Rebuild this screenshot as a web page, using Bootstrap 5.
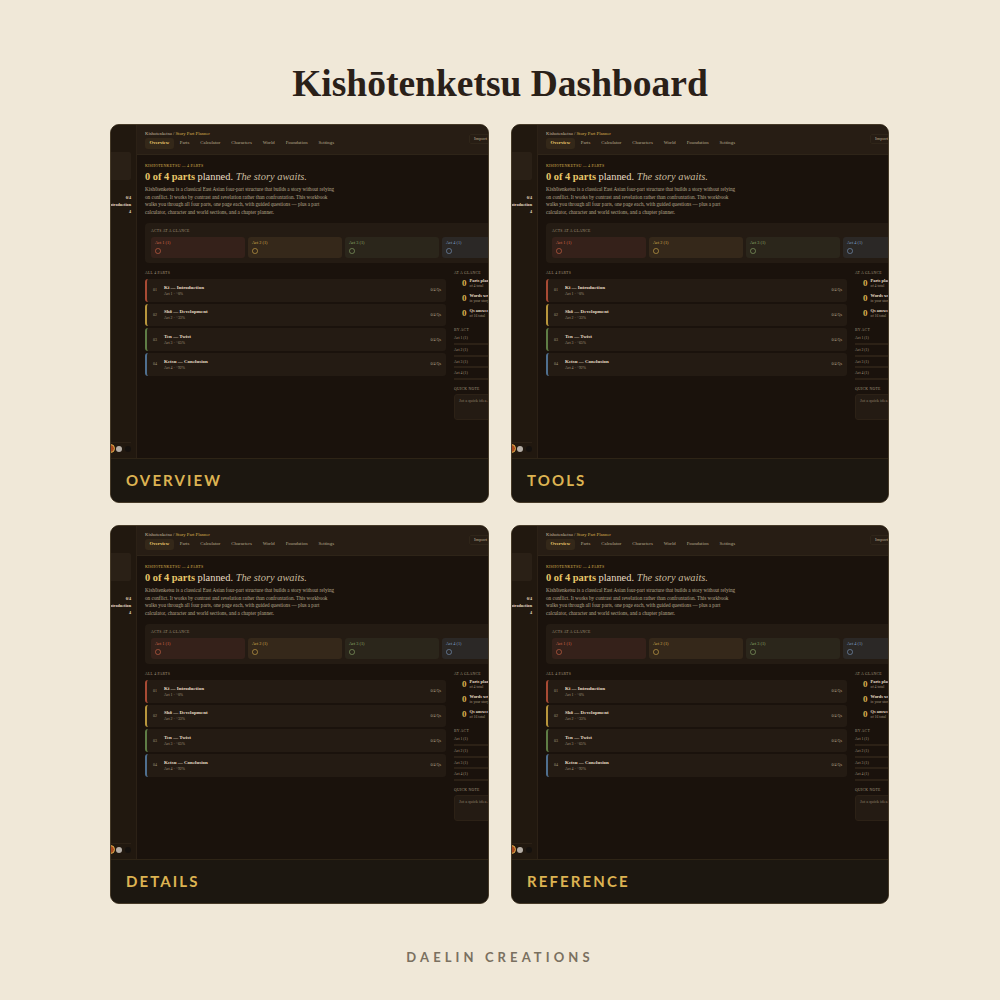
<!doctype html>
<html lang="en"><head><meta charset="utf-8"><title>Kishōtenketsu Dashboard</title>
<link href="https://cdn.jsdelivr.net/npm/bootstrap@5.3.0/dist/css/bootstrap.min.css" rel="stylesheet">
<style>
html,body{height:1000px;overflow:hidden}
body{background:#f0e8d8;font-family:"Liberation Serif",serif;color:#e8dcc4}
.sheet{height:1000px;width:1000px}
.bigtitle{font:700 37.5px/1 "Liberation Serif",serif;color:#2a2018;margin:0;padding-top:65px;height:124px;text-align:center}
.gridwrap{display:grid;grid-template-columns:379px 378px;grid-template-rows:379px 379px;gap:22px;margin-left:110px}
.pane{background:#1a120c;border:1px solid #463a28;border-radius:9px;overflow:hidden;display:flex;flex-direction:column}
.screen{height:334px;flex:none;display:flex;overflow:hidden;border-bottom:1px solid #2e2416}
.side{width:26px;flex:none;background:#21180f;border-right:1px solid #2c2116;display:flex;flex-direction:column;align-items:flex-end;padding-right:5px;font-size:4.2px;color:#e8dcc4;font-weight:700}
.sideblock{width:20px;height:28px;margin-top:27px;background:#2a2016;border-radius:0 2px 2px 0;margin-bottom:14px;flex:none}
.side span{white-space:nowrap;line-height:7px;display:block}
.sidedots{margin-top:auto;border-top:1px solid #2c2116;width:20px;height:16px;padding-bottom:5px;display:flex;justify-content:flex-end;align-items:flex-end;gap:3px;flex:none}
.dot1{width:9px;height:9px;border-radius:50%;background:#a8481c;border:1px solid #d9b04f;margin-right:-2px;flex:none}
.dot2{width:6px;height:6px;border-radius:50%;background:#b5aea6;flex:none;margin-bottom:1.5px}
.dot3{width:6px;height:6px;border-radius:50%;background:#15110e;flex:none;margin-bottom:1.5px}
.mainz{width:413px;flex:none;display:flex;flex-direction:column}
.topz{height:30px;background:#271d14;border-bottom:1px solid #2e2418;padding:5px 0 0 8px;position:relative;flex:none}
.crumb{font-size:4.7px;line-height:7px;color:#c9bb9e}
.crumb b{color:#d9b04f;font-weight:400}
.tabz{display:flex;margin-top:1px}
.tabz span{font-size:4.8px;line-height:10.5px;color:#b8a98c;padding:0 5px;margin-right:1px;white-space:nowrap}
.tabz .on{background:#342819;border-radius:3px;color:#e8c76a;font-weight:700;padding:0 4.5px}
.imp{position:absolute;left:332px;top:9px;height:10px;width:40px;border:1px solid #2f2519;border-radius:2px;font-size:4.8px;line-height:8px;padding-left:4px;color:#b8a98c}
.bodyz{padding:8px 8px 0}
.eyebrow{font-size:4px;line-height:6px;letter-spacing:.2px;color:#d9b04f;text-transform:uppercase}
.head{font-size:10.4px;line-height:13px;margin:1px 0 3px;color:#e8dcc4;font-weight:400;white-space:nowrap;font-family:"Liberation Serif",serif}
.head b{color:#e8c76a}.head i{color:#c9bb9e}
.lede{font-size:5.15px;line-height:7.5px;color:#b8a98c;width:200px;margin:0 0 7px;white-space:nowrap}
.actcard{background:#241b13;border-radius:4px;padding:5px 6px 5px;height:40px;width:397px}
.lbl{font-size:3.8px;line-height:6px;letter-spacing:.25px;color:#a3967c;text-transform:uppercase}
.tiles{display:grid;grid-template-columns:repeat(4,94px);gap:3px;margin-top:3px}
.tile{height:21px;border-radius:3px;padding:3px 4px;font-size:4.3px;line-height:6px}
.ring{display:block;width:5.5px;height:5.5px;border-radius:50%;border:.7px solid currentColor;margin-top:2px;opacity:.6}
.t1{background:#35211a;color:#d8694a}.t2{background:#35281a;color:#d9b04f}.t3{background:#2b261b;color:#8fae6c}.t4{background:#2b2826;color:#7f9fc4}
.cols{display:flex;gap:8px;margin-top:7px}
.leftz{width:301px;flex:none}.rightz{width:89px;flex:none}
.rowz{height:22.5px;background:#241b13;border-radius:3px;border-left:2px solid;margin-top:2.2px;display:flex;align-items:center;padding:0 5px 0 6px}
.lbl+.rowz{margin-top:3px}
.rowz .num{font-size:4px;color:#a3967c;width:11px;flex:none}
.rowz .ttl{font-size:5px;line-height:7px;color:#e8dcc4;font-weight:700}
.rowz .sub{font-size:3.9px;line-height:6px;color:#a3967c}
.rowz .qs{margin-left:auto;font-size:4px;color:#b8a98c}
.c1{border-color:#a84a34}.c2{border-color:#b8963c}.c3{border-color:#5e7d45}.c4{border-color:#4f6f8f}
.stat{height:15px;display:flex;align-items:center;padding-left:8px;white-space:nowrap}
.stat:first-of-type{margin-top:2px}
.stat .big{font-size:9px;font-weight:700;color:#d9b04f;width:7.5px;flex:none}
.stat .a{font-size:4.4px;line-height:5.5px;font-weight:700;color:#e8dcc4}
.stat .b{font-size:3.8px;line-height:5px;color:#a3967c}
.bar{height:11.8px;font-size:3.8px;line-height:6px;color:#a3967c;border-bottom:2px solid #2c2116;padding-top:2px}
.lblb{margin-top:6px}.lblq{margin-top:6px}
.notez{height:26px;background:#241b13;border:1px solid #2c2116;border-radius:3px;margin-top:2px;padding:3px 4px;font-size:4.4px;line-height:6px;color:#8a7d66;white-space:nowrap;overflow:hidden}
.foot{flex:1;background:#1c1710;padding-left:15px;display:flex;align-items:center;font:700 15px/1 Lato,sans-serif;letter-spacing:2.1px;color:#dcb352}
.brand{font:700 13px/1 Lato,sans-serif;letter-spacing:4.1px;color:#7a7060;text-align:center;margin-top:47px}
</style></head><body>
<div class="sheet">
<h1 class="bigtitle">Kishōtenketsu Dashboard</h1>
<div class="gridwrap" id="gridz">
<template id="pane"><section class="pane">
<div class="screen">
<aside class="side"><div class="sideblock"></div><span>0/4</span><span>introduction</span><span>4</span>
<div class="sidedots"><i class="dot1"></i><i class="dot2"></i><i class="dot3"></i></div></aside>
<div class="mainz">
<div class="topz"><div class="crumb">Kishōtenketsu / <b>Story Part Planner</b></div>
<div class="tabz"><span class="on">Overview</span><span>Parts</span><span>Calculator</span><span>Characters</span><span>World</span><span>Foundation</span><span>Settings</span></div>
<div class="imp">Import</div></div>
<div class="bodyz">
<div class="eyebrow">Kishōtenketsu — 4 parts</div>
<div class="head"><b>0 of 4 parts</b> planned. <i>The story awaits.</i></div>
<p class="lede">Kishōtenketsu is a classical East Asian four-part structure that builds a story without relying<br>on conflict. It works by contrast and revelation rather than confrontation. This workbook<br>walks you through all four parts, one page each, with guided questions — plus a part<br>calculator, character and world sections, and a chapter planner.</p>
<div class="actcard"><div class="lbl">Acts at a glance</div><div class="tiles">
<div class="tile t1">Act 1 (1)<i class="ring"></i></div><div class="tile t2">Act 2 (1)<i class="ring"></i></div><div class="tile t3">Act 3 (1)<i class="ring"></i></div><div class="tile t4">Act 4 (1)<i class="ring"></i></div></div></div>
<div class="cols"><div class="leftz"><div class="lbl">All 4 parts</div>
<div class="rowz c1"><span class="num">01</span><div><div class="ttl">Ki — Introduction</div><div class="sub">Act 1 · ~0%</div></div><span class="qs">0/4 Qs</span></div>
<div class="rowz c2"><span class="num">02</span><div><div class="ttl">Shō — Development</div><div class="sub">Act 2 · ~33%</div></div><span class="qs">0/4 Qs</span></div>
<div class="rowz c3"><span class="num">03</span><div><div class="ttl">Ten — Twist</div><div class="sub">Act 3 · ~65%</div></div><span class="qs">0/4 Qs</span></div>
<div class="rowz c4"><span class="num">04</span><div><div class="ttl">Ketsu — Conclusion</div><div class="sub">Act 4 · ~92%</div></div><span class="qs">0/4 Qs</span></div>
</div>
<div class="rightz"><div class="lbl">At a glance</div>
<div class="stat"><span class="big">0</span><div><div class="a">Parts planned</div><div class="b">of 4 total</div></div></div>
<div class="stat"><span class="big">0</span><div><div class="a">Words written</div><div class="b">in your story</div></div></div>
<div class="stat"><span class="big">0</span><div><div class="a">Qs answered</div><div class="b">of 16 total</div></div></div>
<div class="lbl lblb">By act</div>
<div class="bar">Act 1 (1)</div><div class="bar">Act 2 (1)</div><div class="bar">Act 3 (1)</div><div class="bar">Act 4 (1)</div>
<div class="lbl lblq">Quick note</div>
<div class="notez">Jot a quick idea…</div>
</div></div>
</div></div></div>
<div class="foot"></div></section></template>
</div>
<div class="brand">DAELIN CREATIONS</div>
</div>
<script src="https://cdn.jsdelivr.net/npm/bootstrap@5.3.0/dist/js/bootstrap.bundle.min.js"></script>
<script>
var g=document.getElementById('gridz'),t=document.getElementById('pane');
['OVERVIEW','TOOLS','DETAILS','REFERENCE'].forEach(function(n){var c=t.content.cloneNode(true);c.querySelector('.foot').textContent=n;g.appendChild(c);});
</script>
</body></html>
